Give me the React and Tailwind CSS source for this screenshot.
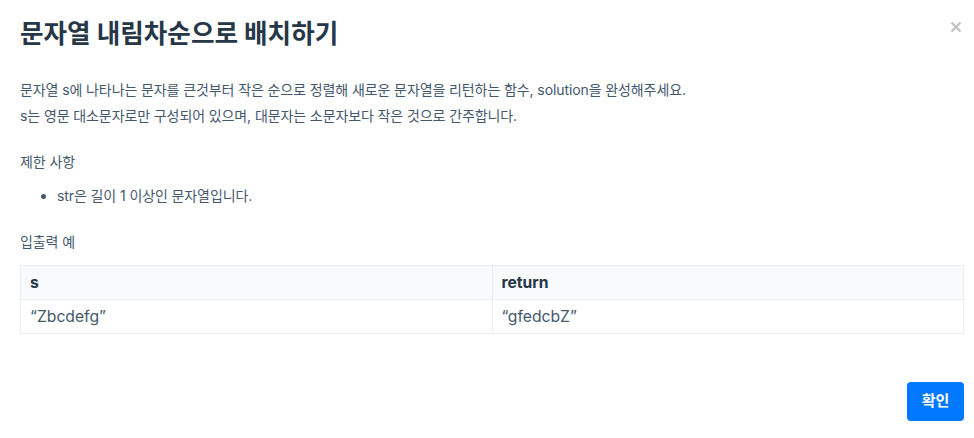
export default function App() {
  const font = { fontFamily: 'Inter, "Noto Sans CJK KR", sans-serif' };
  return (
    <div className="w-[974px] h-[438px] bg-white relative overflow-hidden" style={font}>
      <button className="absolute right-[7px] top-[16px] w-[22px] h-[22px] flex items-center justify-center text-[#c4c4c4]">
        <svg width="12" height="12" viewBox="0 0 12 12">
          <path d="M1.5 1.5 L10.5 10.5 M10.5 1.5 L1.5 10.5" stroke="currentColor" strokeWidth="2.4" />
        </svg>
      </button>
      <div className="pl-5 pr-[10px] pt-[17px]">
        <h1 className="text-[25.6px] leading-[34px] font-bold text-[#263747]">문자열 내림차순으로 배치하기</h1>
        <div className="mt-[26px] text-[14px] leading-[26px] text-[#44576c] tracking-[-0.1px]">
          <p>문자열 s에 나타나는 문자를 큰것부터 작은 순으로 정렬해 새로운 문자열을 리턴하는 함수, solution을 완성해주세요.</p>
          <p>s는 영문 대소문자로만 구성되어 있으며, 대문자는 소문자보다 작은 것으로 간주합니다.</p>
          <h2 className="mt-[20px]">제한 사항</h2>
          <ul className="mt-[8px] list-disc pl-[37px]">
            <li>str은 길이 1 이상인 문자열입니다.</li>
          </ul>
          <h2 className="mt-[20px]">입출력 예</h2>
        </div>
        <table className="mt-[10px] w-full border-collapse text-[15.7px] text-[#44576c]">
          <thead>
            <tr className="bg-[#f9fafc]">
              <th className="border border-[#e9ecf3] text-left font-bold text-[#263747] px-[9px] h-[34px] w-1/2">s</th>
              <th className="border border-[#e9ecf3] text-left font-bold text-[#263747] px-[9px] h-[34px]">return</th>
            </tr>
          </thead>
          <tbody>
            <tr>
              <td className="border border-[#e9ecf3] px-[9px] h-[34px]">“Zbcdefg”</td>
              <td className="border border-[#e9ecf3] px-[9px] h-[34px]">“gfedcbZ”</td>
            </tr>
          </tbody>
        </table>
        <div className="flex justify-end mt-[48px]">
          <button className="w-[57px] h-[39px] rounded-[4px] bg-[#0078ff] text-white text-[15px] font-bold">확인</button>
        </div>
      </div>
    </div>
  );
}
